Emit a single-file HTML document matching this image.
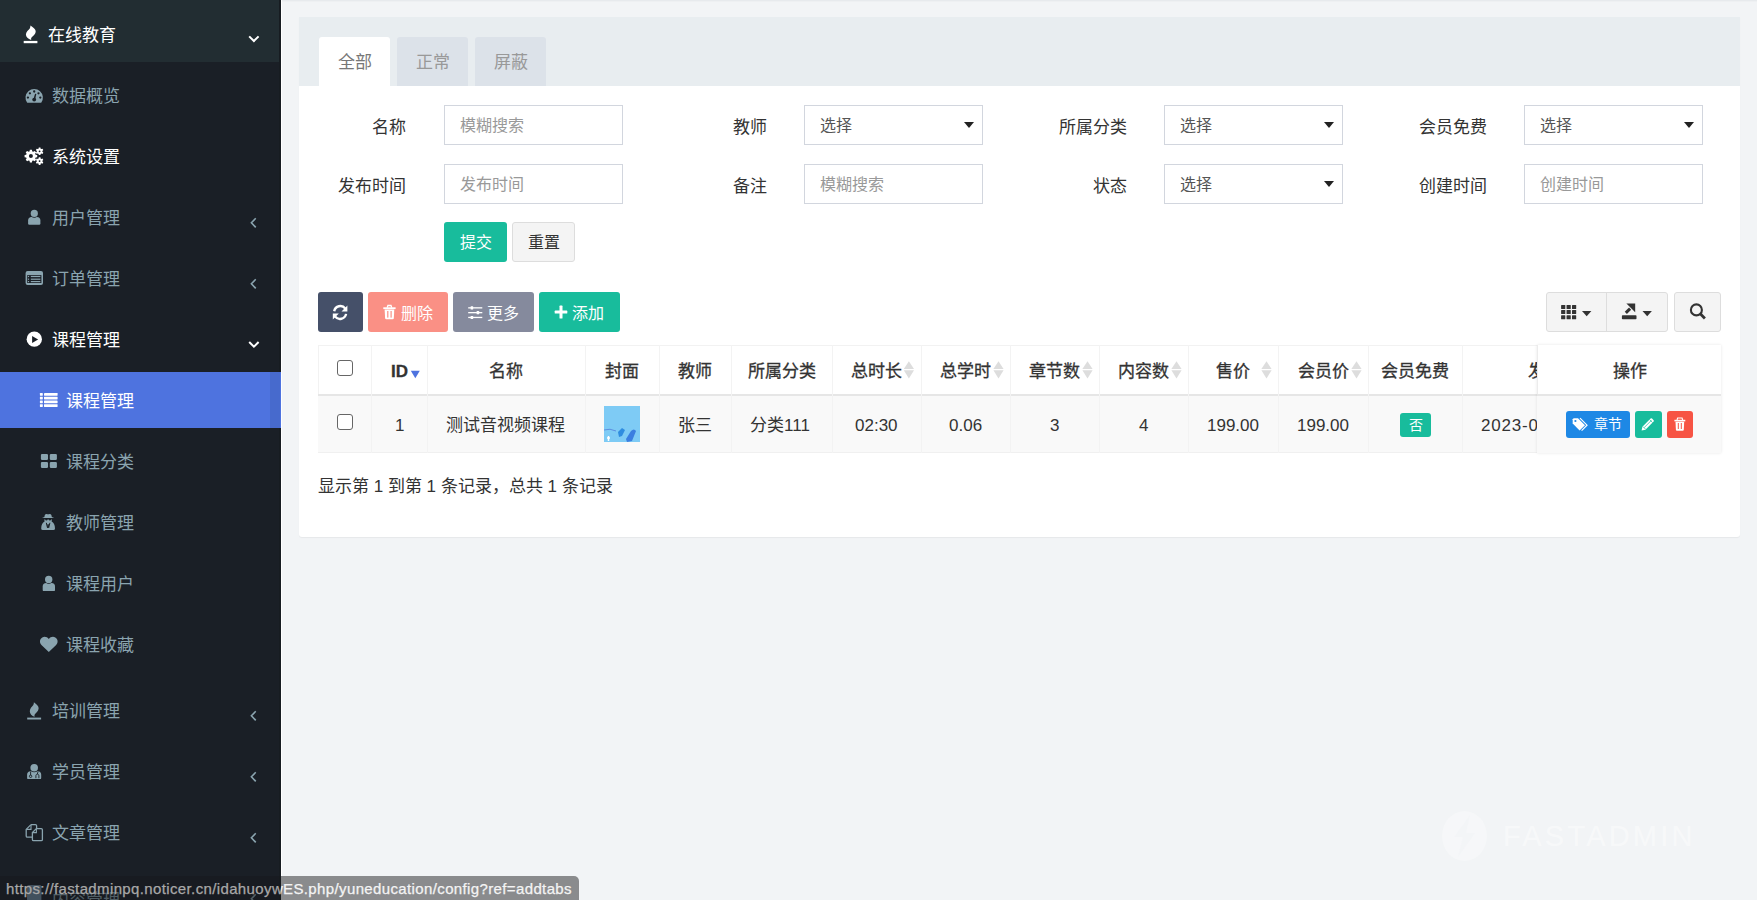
<!DOCTYPE html>
<html lang="zh-CN">
<head>
<meta charset="utf-8">
<title>课程管理</title>
<style>
*{box-sizing:border-box;margin:0;padding:0}
html,body{width:1757px;height:900px;overflow:hidden}
body{position:relative;background:#f2f4f6;font-family:"Liberation Sans",sans-serif;color:#333;font-size:17px}
.a{position:absolute;white-space:nowrap}
#sb{position:absolute;left:0;top:0;width:281px;height:900px;background:#1a1f26;overflow:hidden}
#sb .top{position:absolute;left:0;top:0;width:281px;height:62px;background:#222d32}
#sb .edge{position:absolute;left:279px;top:0;width:2px;height:900px;background:#171c21}
.mi{position:absolute;height:24px;line-height:24px;font-size:17px;color:#8aa4af;white-space:nowrap}
.mi.w{color:#fff}
#active{position:absolute;left:0;top:372px;width:281px;height:56px;background:#4e73df}
#active .sc{position:absolute;left:270px;top:0;width:10px;height:56px;background:rgba(0,0,0,.08)}
#cline{position:absolute;left:281px;top:0;width:1px;height:900px;background:#fff}
#topband{position:absolute;left:282px;top:0;width:1475px;height:2px;background:linear-gradient(#e7eaed 0 1px,#eef0f2 1px 2px)}
#panel{position:absolute;left:299px;top:17px;width:1441px;height:520px;background:#fff;border-radius:0 0 3px 3px;box-shadow:0 1px 1px rgba(0,0,0,.05)}
#ph{position:absolute;left:0;top:0;width:1441px;height:69px;background:#e8edf0}
.tab{position:absolute;top:20px;width:71px;height:49px;line-height:51px;text-align:center;font-size:17px;color:#999;background:#dce2e9;border-radius:3px 3px 0 0}
.tab.on{background:#fff;color:#777}
.lbl{position:absolute;height:24px;line-height:24px;font-size:17px;color:#333;text-align:right;white-space:nowrap;width:100px}
.inp{position:absolute;width:179px;height:40px;border:1px solid #d2d6de;background:#fff}
.inp span{position:absolute;left:15px;top:8px;line-height:24px;font-size:16px;color:#999;white-space:nowrap}
.inp span.v{color:#555}
.inp i{position:absolute;left:159px;top:16px;width:0;height:0;border-left:5px solid transparent;border-right:5px solid transparent;border-top:6px solid #222}
.btn{position:absolute;height:40px;border-radius:3px;font-size:16px;color:#fff;white-space:nowrap}
.btn span{position:absolute;top:10px;line-height:24px}
.th{position:absolute;top:347px;height:50px;line-height:50px;-webkit-text-stroke:.3px #333;font-size:17px;color:#333;white-space:nowrap}
.td{position:absolute;top:397px;height:58px;line-height:58px;font-size:17px;color:#333;white-space:nowrap}
.vl{position:absolute;top:345px;width:1px;height:108px;background:#f3f3f3}
.cb{position:absolute;width:16px;height:16px;border:1.5px solid #666;border-radius:3px;background:#fff}
</style>
</head>
<body>
<div id="sb">
<div class="top"></div>
<div class="edge"></div>
<div id="active"><div class="sc"></div></div>
<div class="mi w" style="top:24px;left:48px">在线教育</div>
<div class="mi" style="top:85px;left:52px">数据概览</div>
<div class="mi w" style="top:146px;left:52px">系统设置</div>
<div class="mi" style="top:207px;left:52px">用户管理</div>
<div class="mi" style="top:268px;left:52px">订单管理</div>
<div class="mi w" style="top:329px;left:52px">课程管理</div>
<div class="mi w" style="top:390px;left:66px">课程管理</div>
<div class="mi" style="top:451px;left:66px">课程分类</div>
<div class="mi" style="top:512px;left:66px">教师管理</div>
<div class="mi" style="top:573px;left:66px">课程用户</div>
<div class="mi" style="top:634px;left:66px">课程收藏</div>
<div class="mi" style="top:700px;left:52px">培训管理</div>
<div class="mi" style="top:761px;left:52px">学员管理</div>
<div class="mi" style="top:822px;left:52px">文章管理</div>
<div class="mi" style="top:889px;left:52px">内容管理</div>
<svg class="a" style="left:0;top:0" width="281" height="900" viewBox="0 0 281 900"><path transform="translate(25.9 25.5) scale(1.111 0.993)" d="M4.1 0 C6.6 1.9 9.1 3.7 8.8 6.6 C8.5 9.1 6.1 10.6 4.9 12.4 C4.6 13.1 4.6 13.8 4.8 14.5 C2 13.6 0 11.6 0 9 C0 6.1 2.4 4.6 3.5 2.9 C3.9 2.1 4.1 1.1 4.1 0Z" fill="#fff"/><rect x="23.7" y="40.9" width="13.7" height="2.3" fill="#fff"/><path d="M27.2 102.8 A8.7 8.7 0 1 1 41.2 102.8 Z" fill="#8aa4af"/><circle cx="27.9" cy="97.6" r="1.15" fill="#1a1f26"/><circle cx="29.9" cy="93.3" r="1.15" fill="#1a1f26"/><circle cx="34.2" cy="91.5" r="1.15" fill="#1a1f26"/><circle cx="38.5" cy="93.3" r="1.15" fill="#1a1f26"/><circle cx="40.3" cy="97.6" r="1.15" fill="#1a1f26"/><path d="M35.1 93.8 L36.3 94.1 L35.2 99.4 L33.4 99.2 Z" fill="#1a1f26"/><circle cx="34.2" cy="99.6" r="1.9" fill="#1a1f26"/><path fill-rule="evenodd" fill="#fff" d="M29.55 151.39 L29.87 149.78 L31.93 149.78 L32.25 151.39 L33.28 151.82 L34.64 150.90 L36.10 152.36 L35.18 153.72 L35.61 154.75 L37.22 155.07 L37.22 157.13 L35.61 157.45 L35.18 158.48 L36.10 159.84 L34.64 161.30 L33.28 160.38 L32.25 160.81 L31.93 162.42 L29.87 162.42 L29.55 160.81 L28.52 160.38 L27.16 161.30 L25.70 159.84 L26.62 158.48 L26.19 157.45 L24.58 157.13 L24.58 155.07 L26.19 154.75 L26.62 153.72 L25.70 152.36 L27.16 150.90 L28.52 151.82Z M32.90 156.10 A2.0 2.0 0 1 0 28.90 156.10 A2.0 2.0 0 1 0 32.90 156.10Z M38.58 148.69 L38.76 147.49 L40.44 147.49 L40.62 148.69 L41.35 149.11 L42.48 148.67 L43.32 150.12 L42.37 150.88 L42.37 151.72 L43.32 152.48 L42.48 153.93 L41.35 153.49 L40.62 153.91 L40.44 155.11 L38.76 155.11 L38.58 153.91 L37.85 153.49 L36.72 153.93 L35.88 152.48 L36.83 151.72 L36.83 150.88 L35.88 150.12 L36.72 148.67 L37.85 149.11Z M40.50 151.30 A0.9 0.9 0 1 0 38.70 151.30 A0.9 0.9 0 1 0 40.50 151.30Z M38.58 158.49 L38.76 157.29 L40.44 157.29 L40.62 158.49 L41.35 158.91 L42.48 158.47 L43.32 159.92 L42.37 160.68 L42.37 161.52 L43.32 162.28 L42.48 163.73 L41.35 163.29 L40.62 163.71 L40.44 164.91 L38.76 164.91 L38.58 163.71 L37.85 163.29 L36.72 163.73 L35.88 162.28 L36.83 161.52 L36.83 160.68 L35.88 159.92 L36.72 158.47 L37.85 158.91Z M40.50 161.10 A0.9 0.9 0 1 0 38.70 161.10 A0.9 0.9 0 1 0 40.50 161.10Z"/><path d="M28.1 223.6 L28.1 220.4 Q28.1 216.9 31.6 216.9 L36.9 216.9 Q40.4 216.9 40.4 220.4 L40.4 223.6 Q40.4 224.8 39.2 224.8 L29.3 224.8 Q28.1 224.8 28.1 223.6Z" fill="#8aa4af"/><circle cx="34.3" cy="213.4" r="4.3" fill="#1a1f26"/><circle cx="34.3" cy="213.4" r="3.6" fill="#8aa4af"/><rect x="25.6" y="270.9" width="17.4" height="14" rx="2" fill="#8aa4af"/><rect x="27.2" y="275.1" width="14.2" height="7.9" fill="#1a1f26"/><rect x="27.9" y="275.9" width="1.2" height="1.2" fill="#8aa4af"/><rect x="30.8" y="275.9" width="9.6" height="1.2" fill="#8aa4af"/><rect x="27.9" y="278.6" width="1.2" height="1.2" fill="#8aa4af"/><rect x="30.8" y="278.6" width="9.6" height="1.2" fill="#8aa4af"/><rect x="27.9" y="281.0" width="1.2" height="1.2" fill="#8aa4af"/><rect x="30.8" y="281.0" width="9.6" height="1.2" fill="#8aa4af"/><circle cx="34.3" cy="339.2" r="7.66" fill="#fff"/><path d="M32.1 336 L38.1 339.4 L32.1 342.9Z" fill="#1a1f26"/><rect x="39.9" y="393.0" width="2.9" height="2.7" rx="0.4" fill="#fff"/><rect x="44" y="393.0" width="13.6" height="2.7" rx="0.4" fill="#fff"/><rect x="39.9" y="396.7" width="2.9" height="2.7" rx="0.4" fill="#fff"/><rect x="44" y="396.7" width="13.6" height="2.7" rx="0.4" fill="#fff"/><rect x="39.9" y="400.5" width="2.9" height="2.7" rx="0.4" fill="#fff"/><rect x="44" y="400.5" width="13.6" height="2.7" rx="0.4" fill="#fff"/><rect x="39.9" y="404.2" width="2.9" height="2.7" rx="0.4" fill="#fff"/><rect x="44" y="404.2" width="13.6" height="2.7" rx="0.4" fill="#fff"/><rect x="40.9" y="453.9" width="7.1" height="6.1" rx="1.2" fill="#8aa4af"/><rect x="49.8" y="453.9" width="7.1" height="6.1" rx="1.2" fill="#8aa4af"/><rect x="40.9" y="461.9" width="7.1" height="6.1" rx="1.2" fill="#8aa4af"/><rect x="49.8" y="461.9" width="7.1" height="6.1" rx="1.2" fill="#8aa4af"/><path d="M44.4 517 Q44.6 513.8 46.6 514 Q48.1 514.6 49.6 514 Q51.6 513.8 51.8 517 L54.2 517.9 L42 517.9Z" fill="#8aa4af"/><path d="M41.2 528.4 C41.2 525 42.6 522.6 44.6 521.6 L44.2 519 L52 519 L51.6 521.6 C53.6 522.6 55 525 55 528.4 Q55 530 53.4 530 L42.8 530 Q41.2 530 41.2 528.4Z" fill="#8aa4af"/><path d="M43.2 519.1 L53 519.1" stroke="#1a1f26" stroke-width="0.8"/><ellipse cx="46.4" cy="519.6" rx="1.2" ry="0.9" fill="#1a1f26"/><ellipse cx="49.9" cy="519.6" rx="1.2" ry="0.9" fill="#1a1f26"/><path d="M46.3 522.8 L47.5 527.8 L48.1 524.3 L48.7 527.8 L49.9 522.8" stroke="#1a1f26" stroke-width="1" fill="none"/><path d="M42.7 589.9 L42.7 586.4 Q42.7 582.9 46.2 582.9 L51.5 582.9 Q55.0 582.9 55.0 586.4 L55.0 589.9 Q55.0 591.1 53.8 591.1 L43.9 591.1 Q42.7 591.1 42.7 589.9Z" fill="#8aa4af"/><circle cx="48.7" cy="579.5" r="4.4" fill="#1a1f26"/><circle cx="48.7" cy="579.5" r="3.7" fill="#8aa4af"/><path d="M48.8 652.1 L41.7 645.2 C39.2 642.8 39.5 638.8 42.3 637.4 C44.6 636.2 47.3 636.9 48.8 639.1 C50.3 636.9 53 636.2 55.3 637.4 C58.1 638.8 58.4 642.8 55.9 645.2Z" fill="#8aa4af"/><path transform="translate(29.8 702.2) scale(1.000 1.000)" d="M4.1 0 C6.6 1.9 9.1 3.7 8.8 6.6 C8.5 9.1 6.1 10.6 4.9 12.4 C4.6 13.1 4.6 13.8 4.8 14.5 C2 13.6 0 11.6 0 9 C0 6.1 2.4 4.6 3.5 2.9 C3.9 2.1 4.1 1.1 4.1 0Z" fill="#8aa4af"/><rect x="27.2" y="717.6" width="13.9" height="1.9" fill="#8aa4af"/><path d="M27.1 777.9 L27.1 774.7 Q27.1 771.2 30.6 771.2 L37.7 771.2 Q41.2 771.2 41.2 774.7 L41.2 777.9 Q41.2 779.1 40.0 779.1 L28.3 779.1 Q27.1 779.1 27.1 777.9Z" fill="#8aa4af"/><circle cx="34.2" cy="767.7" r="4.5" fill="#1a1f26"/><circle cx="34.2" cy="767.7" r="3.8" fill="#8aa4af"/><path d="M30.6 771.6 L30.6 775.2" stroke="#1a1f26" stroke-width="0.9"/><circle cx="30.6" cy="776.3" r="1.2" fill="none" stroke="#1a1f26" stroke-width="0.9"/><path d="M35.9 778.2 L35.9 775.8 C35.9 773.6 38.9 773.6 38.9 775.8 L38.9 778.2" stroke="#1a1f26" stroke-width="0.9" fill="none"/><path d="M38 771.6 Q37.6 773 37.4 774" stroke="#1a1f26" stroke-width="0.9" fill="none"/><path d="M31 824.6 L35.4 824.6 Q36.6 824.6 36.6 825.8 L36.6 829" stroke="#8aa4af" stroke-width="1.3" fill="none"/><path d="M31 824.6 L26.2 829.4 L26.2 836 Q26.2 837.2 27.4 837.2 L32.4 837.2" stroke="#8aa4af" stroke-width="1.3" fill="none"/><path d="M26.5 829.4 L31 829.4 L31 825" stroke="#8aa4af" stroke-width="1.1" fill="none"/><path d="M36.4 828.6 L41.2 828.6 Q42.4 828.6 42.4 829.8 L42.4 839.5 Q42.4 840.7 41.2 840.7 L33.6 840.7 Q32.4 840.7 32.4 839.5 L32.4 832.6 Z" stroke="#8aa4af" stroke-width="1.3" fill="none"/><path d="M32.7 832.6 L36.4 832.6 L36.4 829" stroke="#8aa4af" stroke-width="1.1" fill="none"/><rect x="27" y="885" width="14.4" height="16" rx="1.5" fill="#6f8aa0"/><path d="M249.2 36.4 L253.9 41.05 L258.6 36.4" stroke="#fff" stroke-width="2" fill="none"/><path d="M249.2 342.0 L253.9 346.65 L258.6 342.0" stroke="#fff" stroke-width="2" fill="none"/><path d="M255.75 218.3 L251.4 222.7 L255.75 227.4" stroke="#8aa4af" stroke-width="1.6" fill="none"/><path d="M255.75 279.3 L251.4 283.7 L255.75 288.4" stroke="#8aa4af" stroke-width="1.6" fill="none"/><path d="M255.75 711.3 L251.4 715.7 L255.75 720.4" stroke="#8aa4af" stroke-width="1.6" fill="none"/><path d="M255.75 772.3 L251.4 776.7 L255.75 781.4" stroke="#8aa4af" stroke-width="1.6" fill="none"/><path d="M255.75 833.3 L251.4 837.7 L255.75 842.4" stroke="#8aa4af" stroke-width="1.6" fill="none"/><path d="M255.75 894.3 L251.4 898.7 L255.75 903.4" stroke="#8aa4af" stroke-width="1.6" fill="none"/></svg>
</div>

<div id="cline"></div>
<div id="topband"></div>
<div id="panel">
<div id="ph">
<div class="tab on" style="left:20px">全部</div>
<div class="tab" style="left:98px">正常</div>
<div class="tab" style="left:176px">屏蔽</div>
</div>
</div>
<div class="lbl" style="left:306px;top:116px">名称</div>
<div class="inp" style="left:444px;top:105px"><span>模糊搜索</span></div>
<div class="lbl" style="left:306px;top:175px">发布时间</div>
<div class="inp" style="left:444px;top:164px"><span>发布时间</span></div>
<div class="lbl" style="left:667px;top:116px">教师</div>
<div class="inp" style="left:804px;top:105px"><span class=v>选择</span><i></i></div>
<div class="lbl" style="left:667px;top:175px">备注</div>
<div class="inp" style="left:804px;top:164px"><span>模糊搜索</span></div>
<div class="lbl" style="left:1027px;top:116px">所属分类</div>
<div class="inp" style="left:1164px;top:105px"><span class=v>选择</span><i></i></div>
<div class="lbl" style="left:1027px;top:175px">状态</div>
<div class="inp" style="left:1164px;top:164px"><span class=v>选择</span><i></i></div>
<div class="lbl" style="left:1387px;top:116px">会员免费</div>
<div class="inp" style="left:1524px;top:105px"><span class=v>选择</span><i></i></div>
<div class="lbl" style="left:1387px;top:175px">创建时间</div>
<div class="inp" style="left:1524px;top:164px"><span>创建时间</span></div>
<div class="btn" style="left:444px;top:222px;width:63px;background:#18bc9c"><span style="left:16px;top:9px">提交</span></div>
<div class="btn" style="left:512px;top:222px;width:63px;background:#f4f4f4;border:1px solid #ddd;color:#333"><span style="left:15px;top:8px">重置</span></div>

<div class="btn" style="left:318px;top:292px;width:45px;background:#455069"><svg class="a" style="left:0;top:0" width="45" height="40" viewBox="318 292 45 40">
<path d="M334.2 311.2 A6.2 6.2 0 0 1 345.3 308.6" stroke="#fff" stroke-width="2.4" fill="none"/><path d="M347.4 305.6 L347.4 311.6 L341.5 311.6Z" fill="#fff"/>
<path d="M346.1 313.9 A6.2 6.2 0 0 1 335 316.4" stroke="#fff" stroke-width="2.4" fill="none"/><path d="M332.8 319.4 L332.8 313.4 L338.8 313.4Z" fill="#fff"/></svg></div>
<div class="btn" style="left:368px;top:292px;width:80px;background:#fa9085"><svg class="a" style="left:0;top:0" width="80" height="40" viewBox="368 292 80 40">
<path d="M387.2 307.6 L387.9 305.5 L391 305.5 L391.7 307.6" stroke="#fff" stroke-width="1.3" fill="none"/><rect x="383.3" y="307.3" width="12.3" height="1.8" fill="#fff"/>
<path d="M384.6 309.6 L394.3 309.6 L393.8 318.2 Q393.7 319.2 392.7 319.2 L386.2 319.2 Q385.2 319.2 385.1 318.2Z" fill="#fff"/>
<rect x="387.2" y="311" width="1.2" height="6.6" fill="#fa9085"/><rect x="390.5" y="311" width="1.2" height="6.6" fill="#fa9085"/></svg><span style="left:33px">删除</span></div>
<div class="btn" style="left:453px;top:292px;width:81px;background:#858a9d"><svg class="a" style="left:0;top:0" width="81" height="40" viewBox="453 292 81 40">
<rect x="468.2" y="307.2" width="14.1" height="1.3" fill="#fff"/><rect x="468.2" y="312" width="14.1" height="1.3" fill="#fff"/><rect x="468.2" y="316.8" width="14.1" height="1.3" fill="#fff"/>
<rect x="470.6" y="306.3" width="2.6" height="3.1" rx=".5" fill="#fff"/><rect x="476.6" y="311.1" width="2.6" height="3.1" rx=".5" fill="#fff"/><rect x="470.6" y="315.9" width="2.6" height="3.1" rx=".5" fill="#fff"/></svg><span style="left:34px">更多</span></div>
<div class="btn" style="left:539px;top:292px;width:81px;background:#18bc9c"><svg class="a" style="left:0;top:0" width="81" height="40" viewBox="539 292 81 40">
<rect x="559.5" y="305.6" width="3" height="12.9" rx=".6" fill="#fff"/><rect x="554.7" y="310.55" width="12.6" height="3" rx=".6" fill="#fff"/></svg><span style="left:33px">添加</span></div>
<div class="a" style="left:1546px;top:292px;width:122px;height:40px;background:#f4f4f4;border:1px solid #ddd;border-radius:3px"></div>
<div class="a" style="left:1606px;top:292px;width:1px;height:40px;background:#ddd"></div>
<div class="a" style="left:1674px;top:292px;width:47px;height:40px;background:#f4f4f4;border:1px solid #ddd;border-radius:3px"></div>
<svg class="a" style="left:1540px;top:290px" width="190" height="45" viewBox="1540 290 190 45"><rect x="1561.10" y="304.90" width="4.2" height="4" rx=".5" fill="#333"/><rect x="1561.10" y="310.10" width="4.2" height="4" rx=".5" fill="#333"/><rect x="1561.10" y="315.30" width="4.2" height="4" rx=".5" fill="#333"/><rect x="1566.55" y="304.90" width="4.2" height="4" rx=".5" fill="#333"/><rect x="1566.55" y="310.10" width="4.2" height="4" rx=".5" fill="#333"/><rect x="1566.55" y="315.30" width="4.2" height="4" rx=".5" fill="#333"/><rect x="1572.00" y="304.90" width="4.2" height="4" rx=".5" fill="#333"/><rect x="1572.00" y="310.10" width="4.2" height="4" rx=".5" fill="#333"/><rect x="1572.00" y="315.30" width="4.2" height="4" rx=".5" fill="#333"/><path d="M1582 311 L1591.4 311 L1586.7 316.3Z" fill="#333"/><rect x="1621.9" y="315.3" width="14.6" height="4" rx=".8" fill="#333"/><path d="M1625.8 312.9 L1630.1 308.6" stroke="#333" stroke-width="3"/><path d="M1626.4 303.4 L1635.2 303.4 L1635.2 312.2Z" fill="#333"/><path d="M1642.5 311 L1651.9 311 L1647.2 316.3Z" fill="#333"/><circle cx="1696.4" cy="309.9" r="5.5" stroke="#333" stroke-width="2.1" fill="none"/><path d="M1700.3 313.8 L1704.9 318.4" stroke="#333" stroke-width="2.8"/></svg>

<div class="a" style="left:318px;top:345px;width:1402px;height:108px;border:1px solid #f2f2f2;border-bottom:none"></div>
<div class="a" style="left:318px;top:394px;width:1402px;height:2px;background:#e6e6e6"></div>
<div class="a" style="left:318px;top:396px;width:1402px;height:57px;background:#f9f9f9"></div>
<div class="a" style="left:318px;top:452px;width:1402px;height:1px;background:#f0f0f0"></div>
<div class="vl" style="left:371px"></div>
<div class="vl" style="left:427px"></div>
<div class="vl" style="left:585px"></div>
<div class="vl" style="left:659px"></div>
<div class="vl" style="left:731px"></div>
<div class="vl" style="left:832px"></div>
<div class="vl" style="left:921px"></div>
<div class="vl" style="left:1010px"></div>
<div class="vl" style="left:1099px"></div>
<div class="vl" style="left:1188px"></div>
<div class="vl" style="left:1278px"></div>
<div class="vl" style="left:1368px"></div>
<div class="vl" style="left:1462px"></div>
<div class="cb" style="left:337px;top:360px"></div>
<div class="cb" style="left:337px;top:414px"></div>
<div class="th" style="left:391px;font-weight:bold">ID</div>
<div class="th" style="left:489px;">名称</div>
<div class="th" style="left:605px;">封面</div>
<div class="th" style="left:678px;">教师</div>
<div class="th" style="left:748px;">所属分类</div>
<div class="th" style="left:851px;">总时长</div>
<div class="th" style="left:940px;">总学时</div>
<div class="th" style="left:1029px;">章节数</div>
<div class="th" style="left:1118px;">内容数</div>
<div class="th" style="left:1216px;">售价</div>
<div class="th" style="left:1298px;">会员价</div>
<div class="th" style="left:1381px;">会员免费</div>
<div class="th" style="left:1528px;">发布时间</div>
<svg class="a" style="left:0;top:0" width="1757" height="900" viewBox="0 0 1757 900"><path d="M410.8 370.8 L419.8 370.8 L415.3 378.3Z" fill="#4e73df"/><path d="M903.8 368.9 L914.0 368.9 L908.9 361.2Z" fill="#ddd"/><path d="M903.8 370.3 L914.0 370.3 L908.9 378.6Z" fill="#ddd"/><path d="M993.4 368.9 L1003.6 368.9 L998.5 361.2Z" fill="#ddd"/><path d="M993.4 370.3 L1003.6 370.3 L998.5 378.6Z" fill="#ddd"/><path d="M1082.4 368.9 L1092.6 368.9 L1087.5 361.2Z" fill="#ddd"/><path d="M1082.4 370.3 L1092.6 370.3 L1087.5 378.6Z" fill="#ddd"/><path d="M1171.4 368.9 L1181.6 368.9 L1176.5 361.2Z" fill="#ddd"/><path d="M1171.4 370.3 L1181.6 370.3 L1176.5 378.6Z" fill="#ddd"/><path d="M1261.4 368.9 L1271.6 368.9 L1266.5 361.2Z" fill="#ddd"/><path d="M1261.4 370.3 L1271.6 370.3 L1266.5 378.6Z" fill="#ddd"/><path d="M1351.4 368.9 L1361.6 368.9 L1356.5 361.2Z" fill="#ddd"/><path d="M1351.4 370.3 L1361.6 370.3 L1356.5 378.6Z" fill="#ddd"/></svg>
<div class="td" style="left:395px">1</div>
<div class="td" style="left:446px">测试音视频课程</div>
<div class="td" style="left:678px">张三</div>
<div class="td" style="left:750px">分类111</div>
<div class="td" style="left:855px">02:30</div>
<div class="td" style="left:949px">0.06</div>
<div class="td" style="left:1050px">3</div>
<div class="td" style="left:1139px">4</div>
<div class="td" style="left:1207px">199.00</div>
<div class="td" style="left:1297px">199.00</div>
<div class="td" style="left:1481px;letter-spacing:.8px">2023-06-01 10:00</div>
<svg class="a" style="left:604px;top:406px" width="36" height="36" viewBox="0 0 36 36"><rect width="36" height="36" fill="#7ecbf5"/>
<path d="M0 24 Q6 22 12 25" stroke="#5b8fe0" stroke-width="1" fill="none"/><path d="M14 26 L18 22 L21 24 L18 30 L15 31Z" fill="#2f8de0"/><path d="M22 33 L27 25 Q30 22 32 25 L28 35 L23 36Z" fill="#3b7fe0"/>
<path d="M3 32 L6 32 M4.5 30 L4.5 35" stroke="#fff" stroke-width="1.5"/></svg>
<div class="a" style="left:1400px;top:413px;width:31px;height:24px;background:#18bc9c;border-radius:3px"><span class="a" style="left:9px;top:0;line-height:24px;font-size:14px;color:#fff">否</span></div>
<div class="a" style="left:1537px;top:345px;width:184px;height:108px;background:#fff;box-shadow:0 0 3px rgba(0,0,0,.1);border-left:1px solid #ececec"></div>
<div class="a" style="left:1537px;top:394px;width:184px;height:2px;background:#e6e6e6"></div>
<div class="a" style="left:1537px;top:396px;width:184px;height:57px;background:#f9f9f9"></div>
<div class="th" style="left:1613px">操作</div>
<div class="a" style="left:1566px;top:411px;width:64px;height:27px;background:#1e88e5;border-radius:3px"><span class="a" style="left:28px;top:1px;line-height:24px;font-size:14px;color:#fff">章节</span></div>
<div class="a" style="left:1635px;top:411px;width:27px;height:27px;background:#18bc9c;border-radius:3px"></div>
<div class="a" style="left:1667px;top:411px;width:26px;height:27px;background:#f75444;border-radius:3px"></div>
<svg class="a" style="left:1560px;top:405px" width="140" height="40" viewBox="1560 405 140 40">
<path d="M1572.7 419.2 L1572.7 423.6 L1579.6 430.6 L1585 425.2 L1578 418.2 L1573.7 418.2Z" fill="#fff"/><circle cx="1575.4" cy="421" r="1.1" fill="#1e88e5"/><path d="M1580 418.2 L1587 425.2 L1581.6 430.6" stroke="#fff" stroke-width="1.2" fill="none"/>
<path d="M1641.6 430.6 L1642.4 426.8 L1650.6 418.6 Q1651.3 417.9 1652 418.6 L1653.6 420.2 Q1654.3 420.9 1653.6 421.6 L1645.4 429.8Z" fill="#fff"/><path d="M1643 426.6 L1645.6 429.2 M1644.2 427.6 L1651.4 420.4" stroke="#18bc9c" stroke-width=".7"/><path d="M1649.6 419.6 L1652.6 422.6" stroke="#18bc9c" stroke-width=".7"/>
<path d="M1677 420 L1677.6 418 L1682.1 418 L1682.7 420" stroke="#fff" stroke-width="1.1" fill="none"/><rect x="1674.4" y="419.8" width="10.9" height="1.6" fill="#fff"/>
<path d="M1675.5 421.8 L1684.2 421.8 L1683.8 429.8 Q1683.7 430.7 1682.8 430.7 L1676.9 430.7 Q1676 430.7 1675.9 429.8Z" fill="#fff"/><rect x="1677.8" y="423" width="1" height="6" fill="#f75444"/><rect x="1680.8" y="423" width="1" height="6" fill="#f75444"/>
</svg>
<div class="a" style="left:318px;top:475px;font-size:17px;line-height:24px;color:#333">显示第 1 到第 1 条记录，总共 1 条记录</div>

<div class="a" style="left:0;top:876px;width:281px;height:24px;overflow:hidden;background:rgba(22,24,28,.5)"><span class="a" style="left:6px;font-size:15px;letter-spacing:.37px;line-height:22px;top:2px;-webkit-text-stroke:.25px currentColor;color:#a8a8a8">https://fastadminpq.noticer.cn/idahuoywES.php/yuneducation/config?ref=addtabs</span></div>
<div class="a" style="left:281px;top:876px;width:298px;height:24px;overflow:hidden;background:#8a8b8d;border-radius:0 5px 0 0"><span class="a" style="left:-275px;font-size:15px;letter-spacing:.37px;line-height:22px;top:2px;-webkit-text-stroke:.25px currentColor;color:#f4f4f4">https://fastadminpq.noticer.cn/idahuoywES.php/yuneducation/config?ref=addtabs</span></div>
<svg class="a" style="left:1440px;top:809px" width="50" height="54" viewBox="0 0 50 54"><ellipse cx="24.5" cy="27" rx="22.5" ry="25" fill="rgba(255,255,255,.3)"/><path d="M30 6 L14 28 L23 28 L18 48 L35 24 L26 24Z" fill="rgba(242,244,246,.7)"/></svg>
<div class="a" style="left:1503px;top:818px;font-size:29px;line-height:36px;letter-spacing:3.2px;color:rgba(255,255,255,.45)">FASTADMIN</div>

</body>
</html>
